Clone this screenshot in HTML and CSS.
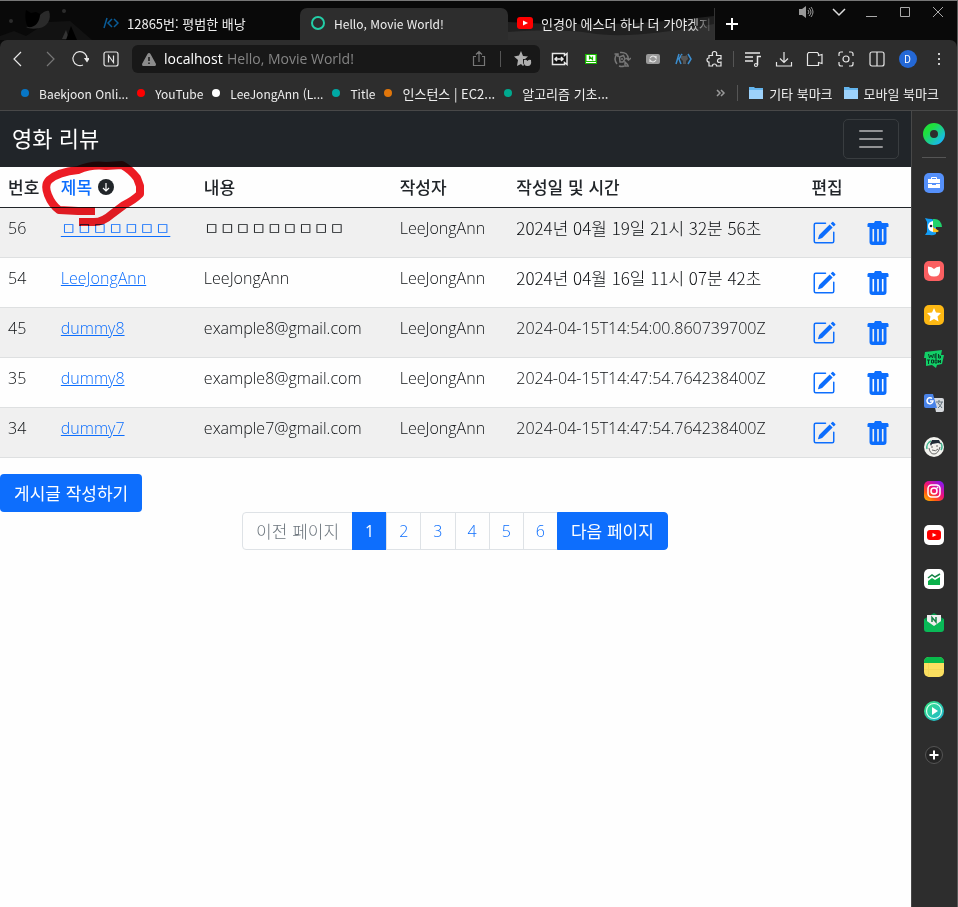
FILE: index.html
```html
<!DOCTYPE html>
<html lang="ko">
<head>
<meta charset="utf-8">
<meta name="viewport" content="width=device-width, initial-scale=1">
<title>Hello, Movie World!</title>
<link rel="stylesheet" href="styles.css">
</head>
<body>
<svg class="defs" width="0" height="0" aria-hidden="true">
  <defs>
    <linearGradient id="ring" x1="0" y1="0" x2="1" y2="1"><stop offset="0.2" stop-color="#1fe03c"/><stop offset="1" stop-color="#18b8f0"/></linearGradient>
    <linearGradient id="insta" x1="0" y1="1" x2="0.8" y2="0"><stop offset="0" stop-color="#ffc800"/><stop offset="0.3" stop-color="#ff5a10"/><stop offset="0.6" stop-color="#f0107c"/><stop offset="1" stop-color="#8a18f0"/></linearGradient>
    <linearGradient id="play" x1="0" y1="0" x2="1" y2="1"><stop offset="0" stop-color="#35e27a"/><stop offset="1" stop-color="#1fb4d8"/></linearGradient>
    <symbol id="edit" viewBox="0 0 16 16"><path d="M15.502 1.94a.5.5 0 0 1 0 .706L14.459 3.69l-2-2L13.502.646a.5.5 0 0 1 .707 0l1.293 1.293zm-1.75 2.456-2-2L4.939 9.21a.5.5 0 0 0-.121.196l-.805 2.414a.25.25 0 0 0 .316.316l2.414-.805a.5.5 0 0 0 .196-.12l6.813-6.814z"/><path fill-rule="evenodd" d="M1 13.5A1.5 1.5 0 0 0 2.500 15h11a1.500 1.500 0 0 0 1.500-1.500v-6a.5.5 0 0 0-1 0v6a.5.5 0 0 1-.5.5h-11a.5.5 0 0 1-.5-.5v-11a.5.5 0 0 1 .5-.5H9a.5.5 0 0 0 0-1H2.500A1.500 1.500 0 0 0 1 2.500v11z"/></symbol>
    <symbol id="trash" viewBox="0 0 24 24"><path fill-rule="evenodd" d="M9 0h6l1 2h5.500l1 1v3H1.500V3l1-1H8zM3.500 6h17v15q0 3-3 3h-11q-3 0-3-3zM6.500 8v12.500h1.600V8zm4.700 0v12.500h1.600V8zm4.700 0v12.500h1.600V8z"/></symbol>
    <symbol id="folder" viewBox="0 0 14 12"><path fill="#64b5ee" d="M0 0h5l1 1h8v4H0z"/><path fill="#9dd2fb" d="M0 3h14v9H0z"/></symbol>
  </defs>
</svg>
<div class="window">
  <header class="chrome">
    <div class="tabstrip">
      <svg class="theme" width="92" height="38" viewBox="0 0 92 38" aria-hidden="true">
        <path fill="#121212" d="M0 38v-4l14-5 12 5 22-14 22-1 22 19z"/>
        <path fill="#2a2a2a" d="M26 25c4 0 10-3 12-8 2-5 7-9 11-8 3 8-2 16-9 17-6 1-11 1-14-1z"/>
        <path fill="#000" d="M26 8l5 3 5-1 4 2c0 9-6 14-12 13-3-5-3-12-2-17z"/>
        <circle cx="11" cy="19" r="2" fill="#2c2c2c"/><circle cx="64" cy="9" r="2" fill="#2c2c2c"/>
        <path fill="#333" d="M66 28l3 9h-7z"/><path fill="#000" d="M71 24l6 14h-11z"/>
      </svg>
      <div class="tab tab-first">
        <svg width="16" height="12" viewBox="0 0 16 12" fill="none" stroke="#0a5c98" stroke-width="1.500"><path d="M4 1L1 11M9 2L5 6l4 4M11 2l4 4-4 4"/></svg>
        <span>12865번: 평범한 배낭</span>
      </div>
      <div class="tab tab-active">
        <svg width="16" height="16" viewBox="0 0 16 16"><circle cx="8" cy="8" r="6" fill="none" stroke="#23ceA7" stroke-width="2"/></svg>
        <span class="latin">Hello, Movie World!</span>
      </div>
      <div class="tab tab-last">
        <svg class="wave" viewBox="0 0 207 32" preserveAspectRatio="none" aria-hidden="true"><path fill="#202020" d="M0 14q50 3 100 2t107-8v24H0z"/><path fill="#303030" d="M0 24q50-4 82 1 40 7 125-9v16H0z"/></svg>
        <svg width="16" height="12" viewBox="0 0 16 12"><rect width="16" height="12" rx="3" fill="#f00"/><path fill="#fff" d="M6 3.500v5l5-2.500z"/></svg>
        <span class="fade">인경아 에스더 하나 더 가야겠지</span>
      </div>
      <button class="plain plus" aria-label="새 탭"><svg width="12" height="12" viewBox="0 0 12 12" stroke="#fff" stroke-width="2"><path d="M6 0v12M0 6h12"/></svg></button>
      <div class="wincontrols">
        <button class="plain" aria-label="소리"><svg width="16" height="14" viewBox="0 0 16 14"><path fill="#999" d="M1 4h3l4-3v12l-4-3H1z"/><path fill="none" stroke="#999" d="M10 5q2 2 0 4M11 3q4 4 0 8M13 2q4 5 0 10"/></svg></button>
        <button class="plain" aria-label="탭 목록"><svg width="14" height="10" viewBox="0 0 14 10" fill="none" stroke="#ddd" stroke-width="1.500"><path d="M1 2l6 6 6-6"/></svg></button>
        <button class="plain" aria-label="최소화"><svg width="12" height="10" viewBox="0 0 12 10" stroke="#aaa"><path d="M0 9.500h11"/></svg></button>
        <button class="plain" aria-label="최대화"><svg width="12" height="12" viewBox="0 0 12 12" fill="none" stroke="#aaa"><path d="M1.500 1.500h9v9h-9z"/></svg></button>
        <button class="plain" aria-label="닫기"><svg width="12" height="12" viewBox="0 0 12 12" stroke="#aaa"><path d="M1 1l10 10M11 1L1 11"/></svg></button>
      </div>
    </div>

    <div class="toolbar">
      <button class="tool" aria-label="뒤로"><svg viewBox="0 0 18 18"><path d="M12 2L5 9l7 7"/></svg></button>
      <button class="tool dim" aria-label="앞으로"><svg viewBox="0 0 18 18"><path d="M7 2l7 7-7 7"/></svg></button>
      <button class="tool" aria-label="새로고침"><svg viewBox="0 0 18 18"><path d="M12 15a7 7 0 1 1 4-6"/><path fill="#e6e6e6" d="M14 8.500h4l-2 3z"/></svg></button>
      <button class="tool" aria-label="네이버"><svg viewBox="0 0 18 18"><rect x="2" y="2" width="14" height="14" rx="2"/><path d="M6.500 12.500v-7l5 7v-7"/></svg></button>
      <div class="address">
        <svg width="14" height="13" viewBox="0 0 14 13" aria-hidden="true"><path fill="#8c8c8c" d="M7 0q1 0 1.500 1L14 11q0 2-1 2H1q-1 0-1-2L5.500 1Q6 0 7 0z"/><path stroke="#181818" stroke-width="1.500" d="M7 4v4M7 9.500V11"/></svg>
        <input type="text" value="localhost" aria-label="주소">
        <span class="page-title">Hello, Movie World!</span>
        <button class="tool dim" aria-label="공유"><svg viewBox="0 0 18 18"><path d="M6 6.500H3.500v9h11v-9H12M9 12V2M6 4.500l3-3 3 3"/></svg></button>
        <i class="sep"></i>
        <button class="tool" aria-label="북마크"><svg viewBox="0 0 18 18"><path fill="#b0b0b0" stroke="none" d="M7 1l2 5 5 .5-3 2.500H9v4l1 2-1 1-2-2-4 2 1-6-4-3.500 5-1z"/><path fill="#b0b0b0" stroke="none" d="M10 10q2-1 3.500 1 1.500-2 3.500-1 1 6-3.500 6T10 10z"/></svg></button>
      </div>
      <button class="tool" aria-label="화면 너비"><svg viewBox="0 0 18 18"><path fill="#111" stroke-width="1.500" d="M1.500 3.500h12v2l2.500-2v11l-2.500-2v2h-12z"/><path stroke-width="1.500" d="M4 9h8M6 7L4 9l2 2M10 7l2 2-2 2"/></svg></button>
      <button class="tool" aria-label="네이버 화면"><svg viewBox="0 0 18 18"><path fill="#19b600" stroke="none" d="M3 4h12v10H3z"/><path fill="#fff" stroke="none" d="M4.500 5h9v6h-9zM4 12h10v1H4z"/><path stroke="#19b600" d="M7.500 9.500v-3l3 3v-3"/></svg></button>
      <button class="tool dim" aria-label="동기화"><svg viewBox="0 0 18 18"><path stroke-width="1.500" d="M4 14Q0 9 4 4M1.500 4H5v3M7 2.500q8-1 8.500 7M13 8l2.500 2L18 8M15 15l-3-3v4h4M11 16q-2 1-5 0M6.500 7l4-1.500L12 9l-2 3H7z"/><circle cx="9" cy="9" r="1" fill="#777" stroke="none"/></svg></button>
      <button class="tool" aria-label="변환"><svg viewBox="0 0 18 18"><rect x="2" y="4" width="14" height="10" rx="2" fill="#999" stroke="none"/><path d="M6 8q3-4 6 0V6M12 10q-3 4-6 0v2"/></svg></button>
      <button class="tool blue" aria-label="코드"><svg viewBox="0 0 18 18"><path stroke-width="1.500" d="M4 4L1 14M7 4L4 9l2 5M13 4l3 5-3 5"/><path fill="#555" stroke="none" d="M6 5l2 1h2l2-1 1 4-2 2v3H8v-3L6 9z"/></svg></button>
      <button class="tool" aria-label="확장 프로그램"><svg viewBox="0 0 18 18"><path d="M3 5.500h3.500q-1-4 2-4t2 4H15V9q-3-1-3.500 1.500T15 12v4h-4.500q0-2-2-2t-2 2H3v-4q-2 0-2-2t2-2z"/></svg></button>
      <i class="sep sep-box"></i>
      <button class="tool" aria-label="재생 목록"><svg viewBox="0 0 18 18"><path stroke-width="1.500" d="M1 3h15M1 7h8M1 11h8M13.500 15V6.500H17"/><circle cx="12" cy="15" r="1.500"/></svg></button>
      <button class="tool" aria-label="다운로드"><svg viewBox="0 0 18 18"><path d="M9 2v10M5 8.500l4 4 4-4M1.500 12v4h15v-4"/></svg></button>
      <button class="tool" aria-label="녹화"><svg viewBox="0 0 18 18"><path d="M1.500 4l1-1.500h9l1 1.500v1.500l3.500-1v9l-3.500-1v3h-11z"/></svg></button>
      <button class="tool" aria-label="캡처"><svg viewBox="0 0 18 18"><circle cx="9" cy="9" r="3"/><path d="M2 6V4q0-2 2-2h2M12 2h2q2 0 2 2v2M16 12v2q0 2-2 2h-2M6 16H4q-2 0-2-2v-2"/></svg></button>
      <button class="tool" aria-label="분할 화면"><svg viewBox="0 0 18 18"><rect x="2" y="2" width="14" height="14" rx="2"/><path d="M9 2v14"/></svg></button>
      <button class="tool" aria-label="프로필"><span class="avatar">D</span></button>
      <button class="tool" aria-label="메뉴"><svg viewBox="0 0 18 18"><path stroke="none" fill="#ccc" d="M8 3h2v2H8zM8 8h2v2H8zM8 13h2v2H8z"/></svg></button>
    </div>

    <nav class="bookmarks" aria-label="북마크">
      <a href="#" class="latin"><i class="dot dot-blue"></i>Baekjoon Onli...</a>
      <a href="#" class="latin"><i class="dot dot-red"></i>YouTube</a>
      <a href="#" class="latin"><i class="dot dot-white"></i>LeeJongAnn (L...</a>
      <a href="#" class="latin"><i class="dot dot-teal"></i>Title</a>
      <a href="#"><i class="dot dot-orange"></i>인스턴스 | EC2...</a>
      <a href="#"><i class="dot dot-green"></i>알고리즘 기초...</a>
      <div class="overflow">
        <button class="plain" aria-label="더보기"><svg width="10" height="8" viewBox="0 0 10 8" fill="none" stroke="#999" stroke-width="1.500"><path d="M1 1l3 3-3 3M5 1l3 3-3 3"/></svg></button>
        <i class="sep"></i>
        <a href="#" class="folder"><svg width="14" height="12"><use href="#folder"/></svg>기타 북마크</a>
        <a href="#" class="folder"><svg width="14" height="12"><use href="#folder"/></svg>모바일 북마크</a>
      </div>
    </nav>
  </header>

  <div class="stage">
    <main>
      <nav class="navbar">
        <a href="#" class="brand">영화 리뷰</a>
        <button class="toggler" aria-label="메뉴 열기"><svg width="30" height="30" viewBox="0 0 30 30" stroke="#929395" stroke-width="2" stroke-linecap="round"><path d="M4 7h22M4 15h22M4 23h22"/></svg></button>
      </nav>
      <table>
        <colgroup><col class="c-id"><col class="c-title"><col class="c-body"><col class="c-author"><col class="c-date"><col class="c-act"><col class="c-act"></colgroup>
        <thead>
          <tr class="ko"><th>번호</th><th><a href="#" class="sort">제목<svg width="16" height="16" viewBox="0 0 16 16"><circle cx="8" cy="8" r="8" fill="#212529"/><path fill="none" stroke="#fff" stroke-width="1.200" d="M8 4v8M5 9l3 3 3-3"/></svg></a></th><th>내용</th><th>작성자</th><th>작성일 및 시간</th><th colspan="2">편집</th></tr>
        </thead>
        <tbody>
          <tr><td>56</td><td class="ko"><a href="#">ㅁㅁㅁㅁㅁㅁㅁ</a></td><td class="ko">ㅁㅁㅁㅁㅁㅁㅁㅁㅁ</td><td>LeeJongAnn</td><td class="ko">2024년 04월 19일 21시 32분 56초</td><td><a href="#" class="act" aria-label="수정"><svg><use href="#edit"/></svg></a></td><td><a href="#" class="act" aria-label="삭제"><svg><use href="#trash"/></svg></a></td></tr>
          <tr><td>54</td><td><a href="#">LeeJongAnn</a></td><td>LeeJongAnn</td><td>LeeJongAnn</td><td class="ko">2024년 04월 16일 11시 07분 42초</td><td><a href="#" class="act" aria-label="수정"><svg><use href="#edit"/></svg></a></td><td><a href="#" class="act" aria-label="삭제"><svg><use href="#trash"/></svg></a></td></tr>
          <tr><td>45</td><td><a href="#">dummy8</a></td><td>example8@gmail.com</td><td>LeeJongAnn</td><td>2024-04-15T14:54:00.860739700Z</td><td><a href="#" class="act" aria-label="수정"><svg><use href="#edit"/></svg></a></td><td><a href="#" class="act" aria-label="삭제"><svg><use href="#trash"/></svg></a></td></tr>
          <tr><td>35</td><td><a href="#">dummy8</a></td><td>example8@gmail.com</td><td>LeeJongAnn</td><td>2024-04-15T14:47:54.764238400Z</td><td><a href="#" class="act" aria-label="수정"><svg><use href="#edit"/></svg></a></td><td><a href="#" class="act" aria-label="삭제"><svg><use href="#trash"/></svg></a></td></tr>
          <tr><td>34</td><td><a href="#">dummy7</a></td><td>example7@gmail.com</td><td>LeeJongAnn</td><td>2024-04-15T14:47:54.764238400Z</td><td><a href="#" class="act" aria-label="수정"><svg><use href="#edit"/></svg></a></td><td><a href="#" class="act" aria-label="삭제"><svg><use href="#trash"/></svg></a></td></tr>
        </tbody>
      </table>
      <button class="write">게시글 작성하기</button>
      <nav class="pagination" aria-label="페이지">
        <span class="wide">이전 페이지</span><a href="#" class="on">1</a><a href="#">2</a><a href="#">3</a><a href="#">4</a><a href="#">5</a><a href="#">6</a><a href="#" class="wide on">다음 페이지</a>
      </nav>
      <svg class="scribble" width="160" height="130" viewBox="0 0 160 130" aria-hidden="true"><path d="M95 100H78L59 99Q52 94 48 84Q44 74 49 69Q58 61 78 59Q92 53 106 55L122 54Q131 59 137 67L140 75V83Q134 89 124 94L112 103Q102 112 92 111H79"/></svg>
    </main>

    <aside aria-label="사이드바">
      <a href="#" aria-label="웨일"><svg class="ring" viewBox="0 0 22 22"><circle cx="11" cy="11" r="7.500" fill="none" stroke="url(#ring)" stroke-width="7"/></svg></a>
      <hr>
      <a href="#" aria-label="도구"><svg viewBox="0 0 20 20"><rect width="20" height="20" rx="5" fill="#5590fa"/><path fill="#fff" d="M4 6h12v4H4zM4 11h4v1h4v-1h4v4H4z"/><path fill="none" stroke="#fff" d="M7.500 6V4.500h5V6"/></svg></a>
      <a href="#" aria-label="파파고"><svg viewBox="0 0 20 20"><path fill="#139df5" d="M1 1q3 1 7 1l4 3v12q-3 2-6 1H1l2-3V5z"/><path fill="#20d26b" d="M9 2q8-1 9 8h-9z"/><path fill="#fff" d="M9 4v11q-5-1-5-6 0-4 5-5z"/><path fill="#ffc31f" d="M9 10l6 4q-2 2-6 1z"/><circle cx="7" cy="9" r="1.300" fill="#213"/></svg></a>
      <a href="#" aria-label="쇼핑"><svg viewBox="0 0 20 20"><rect width="20" height="20" rx="5" fill="#fb5f61"/><path fill="#fff" d="M4 5.500q4 0 6 2.500 2-2.500 6-2.500V10q0 5.500-6 5.500T4 10z"/></svg></a>
      <a href="#" aria-label="즐겨찾기"><svg viewBox="0 0 20 20"><rect width="20" height="20" rx="5" fill="#fdb813"/><path fill="#fff" d="M10 3l2 4.500 5 .5-3.500 3.500 1 5L10 14l-4.500 2.500 1-5L3 8l5-.5z"/></svg></a>
      <a href="#" aria-label="웹툰"><svg viewBox="0 0 20 20"><path fill="#12cf67" d="M1 3l17-2-1 5h3l-2 9-5 1-1 3-4-3-6 1V9H0z"/><path fill="none" stroke="#093c24" d="M4.500 5l1 4 1.500-3 1.500 3 1-4M13 5h-2v4h2M11 7h2M14.500 5v4h2V7h-2M3 11h3M4.500 11v4M7.500 11h2v3h-2zM11 11h2v3h-2zM14.500 14v-3l2 3v-3"/></svg></a>
      <a href="#" aria-label="번역"><svg viewBox="0 0 20 20"><path fill="#d6d9dd" d="M9 5h9q2 0 2 2v10q0 2-2 2h-6z"/><path fill="#4a83e8" d="M2 1h7l4 14H2q-2 0-2-2V3q0-2 2-2z"/><path fill="none" stroke="#fff" stroke-width="1.500" d="M8 5.500A3 3 0 1 0 9 8H6"/><path fill="none" stroke="#61717c" d="M12 9h7M15 7v2M18 9q-1 4-4 6M14 10l4 5"/></svg></a>
      <a href="#" aria-label="프로필"><svg viewBox="0 0 20 20"><circle cx="10" cy="10" r="10" fill="#f2f2ee"/><path fill="none" stroke="#43b690" stroke-width="1.500" d="M3 12a7 7 0 0 1 4-8M17 6q2 4 0 7"/><path fill="#202b36" d="M6 7l2-4 7 0 2 4-3-1-6 1-1 2z"/><path fill="none" stroke="#444" stroke-width=".8" d="M7 10h2M12 9h2M8 13q4 2 6-1M5 11q1 6 5 6t6-7"/></svg></a>
      <a href="#" aria-label="인스타그램"><svg viewBox="0 0 20 20"><rect width="20" height="20" rx="5" fill="url(#insta)"/><g fill="none" stroke="#fff" stroke-width="1.500"><rect x="4" y="4" width="12" height="12" rx="3.500"/><circle cx="10" cy="10" r="3"/></g><circle cx="13.500" cy="6.500" r="1" fill="#fff"/></svg></a>
      <a href="#" aria-label="유튜브"><svg viewBox="0 0 20 20"><rect width="20" height="20" rx="5" fill="#fff"/><rect x="3" y="5" width="14" height="10" rx="3" fill="#f00"/><path fill="#fff" d="M8.500 8v4l4-2z"/></svg></a>
      <a href="#" aria-label="증권"><svg viewBox="0 0 20 20"><rect width="20" height="20" rx="5" fill="#fff"/><path fill="#0bb14b" d="M4 12l4-3 3 2 5-3v8H4z"/><path fill="none" stroke="#168347" stroke-width="1.500" d="M4 9l4-3 3 2 5-3"/></svg></a>
      <a href="#" aria-label="메일"><svg viewBox="0 0 20 20"><path fill="#05994a" d="M0 6l10-6 10 6v6H0z"/><path fill="#eee" d="M3 2h14v8l-7 4-7-4z"/><path fill="#09b957" d="M0 6l10 7 10-7v10q0 3-3 3H3q-3 0-3-3z"/><path fill="none" stroke="#168347" stroke-width="1.500" d="M8 9V4.500l4 4.500V4"/></svg></a>
      <a href="#" aria-label="메모"><svg viewBox="0 0 20 20"><rect width="20" height="20" rx="5" fill="#fbdf60"/><path fill="#08b94b" d="M0 6V5q0-5 5-5h10q5 0 5 5v1z"/><path fill="none" stroke="#f3d758" d="M4.500 6v14M0 12.500h20"/></svg></a>
      <a href="#" aria-label="재생"><svg viewBox="0 0 20 20"><circle cx="10" cy="10" r="10" fill="url(#play)"/><circle cx="10" cy="10" r="7.500" fill="none" stroke="#d8fff0" stroke-width="1.200"/><path fill="#fff" d="M8 6v8l6-4z"/></svg></a>
      <a href="#" aria-label="추가"><svg viewBox="0 0 20 20"><circle cx="10" cy="10" r="8.500" fill="#252525" stroke="#555"/><path stroke="#fff" stroke-width="2" d="M10 5.500v9M5.500 10h9"/></svg></a>
    </aside>
  </div>
</div>
</body>
</html>
```
FILE: styles.css
```css
* { box-sizing: border-box; }
body { margin: 0; font-family: "Open Sans", "Noto Sans CJK KR", sans-serif; font-size: 16px; color: #212529; background: #fff; }
a { color: #0d6efd; }
button { font: inherit; cursor: pointer; }
svg { display: block; flex: none; }
.defs { position: absolute; }
.window { min-height: 100vh; display: flex; flex-direction: column; border-top: 1px solid #777; border-right: 1px solid #5a5a5a; }
.plain { border: 0; padding: 0; background: none; display: flex; align-items: center; justify-content: center; }
.sep { width: 1px; height: 16px; background: #555; flex: none; }
.ko { font-family: "Noto Sans CJK KR", sans-serif; font-size: 17px; }

.chrome { background: #090909; color: #eee; font-family: "Noto Sans CJK KR", sans-serif; font-size: 13px; }
.chrome .latin { font-size: 12px; }
.tabstrip { display: flex; align-items: flex-end; height: 39px; }
.tab { position: relative; display: flex; align-items: center; height: 32px; padding-bottom: 2px; white-space: nowrap; overflow: hidden; }
.tab-first { width: 208px; padding-left: 11px; gap: 8px; }
.tab-active { width: 208px; padding-left: 10px; gap: 8px; background: #2d2d2d; border-radius: 7px 7px 0 0; }
.tab-last { width: 207px; padding-left: 9px; gap: 8px; border-right: 1px solid #333; }
.tab-last > * { position: relative; }
.tab-last .wave { position: absolute; left: 0; top: 0; width: 100%; height: 100%; }
.fade { flex: 1; overflow: hidden; mask-image: linear-gradient(to right, #000 86%, transparent); }
.plus { width: 34px; height: 32px; }
.wincontrols { display: flex; align-self: flex-start; margin-left: auto; padding-right: 3px; }
.wincontrols .plain { width: 33px; height: 22px; }

.toolbar { display: flex; align-items: center; height: 38px; padding: 0 3px 0 2px; background: #2d2d2d; border-radius: 7px 7px 0 0; }
.tool { width: 31px; height: 28px; border: 0; padding: 0; background: none; color: #e6e6e6; display: flex; flex: none; align-items: center; justify-content: center; }
.tool svg { width: 18px; height: 18px; fill: none; stroke: currentColor; stroke-width: 1.2; }
.dim { color: #777; }
.blue { color: #3b8ed0; }
.sep-box { margin: 0 3px; }
.avatar { width: 18px; height: 18px; border-radius: 50%; background: #2468d6; color: #fff; font-size: 10px; line-height: 18px; }
.address { flex: 1; min-width: 0; height: 28px; margin: 0 4px 0 6px; padding: 0 2px 0 10px; display: flex; align-items: center; background: #181818; border-radius: 6px; font-family: "Open Sans", sans-serif; font-size: 14px; line-height: 18px; }
.address .sep { margin: 0 6px; }
.address input { width: 63px; margin-left: 8px; padding: 0; border: 0; background: none; color: #fff; font: inherit; }
.page-title { flex: 1; color: #858585; white-space: nowrap; }

.bookmarks { display: flex; align-items: center; gap: 9px; height: 32px; padding: 0 18px 2px 21px; background: #2d2d2d; white-space: nowrap; }
.bookmarks a { display: flex; align-items: center; gap: 10px; color: #eee; text-decoration: none; }
.overflow { display: flex; align-items: center; gap: 11px; margin-left: auto; }
.bookmarks .folder { gap: 6px; }
.dot { width: 8px; height: 8px; border-radius: 50%; }
.dot-blue { background: #0776c6; }
.dot-red { background: #f00; }
.dot-white { background: #fff; }
.dot-teal { background: #00a9a5; }
.dot-orange { background: #e0760b; }
.dot-green { background: #00a98f; }

.stage { flex: 1; display: flex; border-top: 1px solid #484848; }
main { position: relative; flex: 1; min-width: 0; background: #fefefe; }
.navbar { display: flex; align-items: center; justify-content: space-between; height: 56px; padding: 0 12px; background: #212529; }
.brand { padding-bottom: 4px; color: #fff; font-family: "Noto Sans CJK KR", sans-serif; font-size: 22px; line-height: 30px; text-decoration: none; }
.toggler { height: 40px; padding: 4px 12px; border: 1px solid #393d40; border-radius: 5px; background: none; }

table { width: 100%; table-layout: fixed; border-collapse: separate; border-spacing: 0; margin-bottom: 16px; line-height: 24px; white-space: nowrap; }
.c-id { width: 5.8%; }
.c-title { width: 15.7%; }
.c-body { width: 21.5%; }
.c-author { width: 12.8%; }
.c-date { width: 32.4%; }
.c-act { width: 5.9%; }
th, td { padding: 8px; text-align: left; vertical-align: top; }
th { height: 41px; font-weight: 500; border-bottom: 1px solid #212529; }
td { height: 50px; color: #0c0f12; font-weight: 300; border-bottom: 1px solid #dee0e1; }
tbody tr:nth-child(odd) { background: #f0f0f0; }
.sort { display: flex; align-items: center; gap: 6px; text-decoration: none; }
.act { display: flex; padding: 5px 0 0 1px; }
.act svg { width: 24px; height: 24px; fill: #0d6efd; }

.write { display: block; height: 38px; padding: 0 14px 2px; border: 0; border-radius: 4px; background: #0d6efd; color: #fff; font-family: "Noto Sans CJK KR", sans-serif; font-size: 17px; }
.pagination { display: flex; justify-content: center; line-height: 36px; font-weight: 300; }
.pagination > * { height: 38px; padding: 0 12px; border: 1px solid #dee2e6; margin-left: -1px; text-decoration: none; }
.pagination .wide { padding: 0 13px; font-family: "Noto Sans CJK KR", sans-serif; font-size: 17px; color: #6c757d; }
.pagination .wide:first-child { border-radius: 4px 0 0 4px; }
.pagination .wide:last-child { border-radius: 0 4px 4px 0; }
.pagination .on, .pagination .wide.on { background: #0d6efd; border-color: #0d6efd; color: #fff; font-weight: 400; }

.scribble { position: absolute; left: 0; top: 0; pointer-events: none; mix-blend-mode: multiply; }
.scribble path { fill: none; stroke: #ed1c24; stroke-width: 8; stroke-linejoin: round; }

aside { width: 46px; flex: none; display: flex; flex-direction: column; align-items: center; gap: 24px; padding: 12px 2px 0 0; background: #2d2d2d; border-left: 1px solid #484848; }
aside svg { width: 20px; height: 20px; }
aside .ring { width: 22px; height: 22px; }
aside hr { width: 24px; height: 1px; margin: -12px 0 -9px; border: 0; background: #555; }
```
